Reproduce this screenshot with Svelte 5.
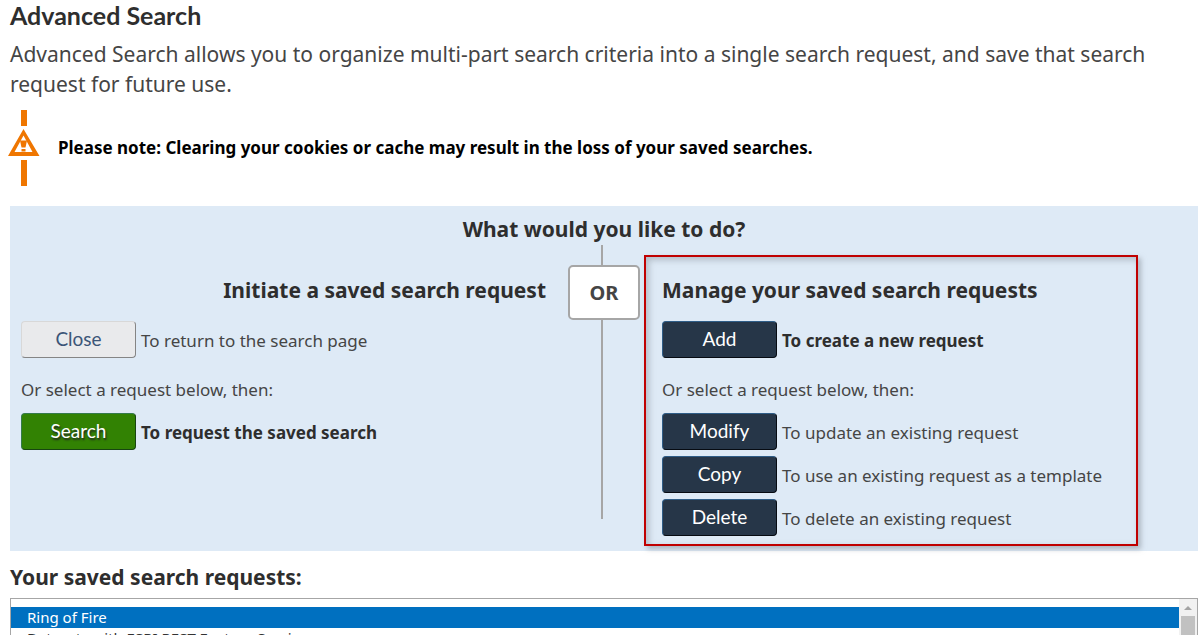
<script>
  const savedRequests = [
    'Ring of Fire',
    'Datasets with ESRI REST Feature Service',
    'Coastal elevation models',
    'Marine geology samples',
    'Sea surface temperature',
    'Storm events',
    'Tsunami hazards',
    'Volcano locations'
  ];
  const manageActions = [
    { label: 'Modify', hint: 'To update an existing request' },
    { label: 'Copy', hint: 'To use an existing request as a template' },
    { label: 'Delete', hint: 'To delete an existing request' }
  ];
  let selected = $state(savedRequests[0]);
</script>

<main>
  <h1>Advanced Search</h1>
  <p class="intro">
    Advanced Search allows you to organize multi-part search criteria into a single search
    request, and save that search request for future use.
  </p>

  <div class="note">
    <svg class="warning" width="32" height="76" viewBox="0 0 32 76" aria-hidden="true">
      <path fill="#ef7600" d="M13 0h6v16h-6zM13 50h6v26h-6z" />
      <path fill="#ef7600" fill-rule="evenodd" d="M15.500 19L31.500 46H0zM15.500 25.500L6.500 42h18z" />
      <path fill="#ef7600" d="M12 30.500h7l-1.500 7h-4zM13.500 39h4v2.500h-4z" />
    </svg>
    <strong>Please note: Clearing your cookies or cache may result in the loss of your saved searches.</strong>
  </div>

  <section class="panel">
    <h2 class="question">What would you like to do?</h2>
    <div class="choices">
      <div class="choice initiate">
        <h2>Initiate a saved search request</h2>
        <div class="action">
          <button type="button" class="close">Close</button>
          <span>To return to the search page</span>
        </div>
        <p>Or select a request below, then:</p>
        <div class="action">
          <button type="button" class="search">Search</button>
          <strong>To request the saved search</strong>
        </div>
      </div>

      <div class="divider">
        <i class="line top"></i>
        <span class="or">OR</span>
        <i class="line"></i>
      </div>

      <div class="choice manage">
        <h2>Manage your saved search requests</h2>
        <div class="action">
          <button type="button">Add</button>
          <strong>To create a new request</strong>
        </div>
        <p>Or select a request below, then:</p>
        <div class="actions">
          {#each manageActions as action}
            <div class="action">
              <button type="button">{action.label}</button>
              <span>{action.hint}</span>
            </div>
          {/each}
        </div>
      </div>
    </div>
  </section>

  <label for="requests">Your saved search requests:</label>
  <div class="list">
    <select id="requests" size="6" bind:value={selected}>
      {#each savedRequests as request}
        <option value={request}>{request}</option>
      {/each}
    </select>
    <div class="scrollbar" aria-hidden="true">
      <svg width="8" height="4" viewBox="0 0 8 4"><path fill="#a3a3a3" d="M0 4l4-4 4 4z" /></svg>
      <div class="thumb"></div>
    </div>
  </div>
</main>

<style>
  :global(body) {
    height: 100vh;
    overflow: hidden;
    background: #fff;
  }
  * {
    box-sizing: border-box;
  }
  main {
    height: 100vh;
    overflow: hidden;
    padding: 0 4px 0 10px;
    color: #454545;
    font: 17px/24px "Noto Sans", sans-serif;
  }
  h1, h2, p {
    margin: 0;
  }
  h1 {
    color: #2e2e2e;
    font: bold 25px/30px Lato, sans-serif;
  }
  h2, label {
    color: #2e2e2e;
    font-size: 21px;
    font-weight: bold;
    line-height: 28px;
  }
  .intro {
    margin-top: 9px;
    font-size: 21px;
    line-height: 30px;
  }
  .note {
    display: flex;
    align-items: center;
    gap: 18px;
    margin: 11px 0 20px -2px;
    color: #000;
  }
  .warning {
    flex: none;
  }
  .panel {
    padding-top: 9px;
    background: #deeaf6;
  }
  .question {
    text-align: center;
  }
  .choices {
    display: grid;
    grid-template-columns: 1fr 72px 1fr;
    padding-bottom: 5px;
  }
  .choice {
    margin-top: 12px;
    padding-top: 21px;
  }
  .initiate {
    padding-left: 11px;
  }
  .initiate h2 {
    padding-right: 22px;
    text-align: right;
  }
  .manage {
    margin-right: 60px;
    margin-left: 4px;
    padding: 19px 16px 8px;
    border: 2px solid #c00000;
    box-shadow: 3px 3px 5px #8c959e99, inset 3px 3px 6px #8c959e88;
  }
  .choice h2 {
    margin-bottom: 17px;
  }
  .action {
    display: flex;
    align-items: center;
    gap: 5px;
  }
  .action > :last-child {
    padding-top: 2px;
  }
  .action strong {
    color: #2e2e2e;
  }
  .choice p {
    margin: 20px 0 11px;
  }
  .actions {
    display: grid;
    gap: 6px;
  }
  button {
    width: 115px;
    height: 37px;
    padding: 0 0 2px;
    border: 1px solid;
    border-color: #2f5d87 #060b12 #060b12 #2f5d87;
    border-radius: 4px;
    background: #263648;
    color: #fff;
    font: 19px/30px Lato, sans-serif;
  }
  .close {
    border-color: #d8d8d8 #858585 #858585 #d8d8d8;
    background: #e9eaec;
    color: #3b5578;
  }
  .search {
    border-color: #347b4a #174511 #174511 #347b4a;
    background: #328203;
    text-shadow: 1px 2px 2px #222;
  }
  .divider {
    display: flex;
    flex-direction: column;
    align-items: center;
    padding: 2px 0 27px;
  }
  .line {
    flex: 1;
    width: 2px;
    margin-right: 4px;
    background: #a6a6a6;
  }
  .line.top {
    flex: 0 0 20px;
  }
  .or {
    width: 100%;
    border: 2px solid #a6a6a6;
    border-radius: 5px;
    background: #fff;
    font-size: 20px;
    font-weight: bold;
    line-height: 51px;
    text-align: center;
  }
  label {
    display: block;
    margin: 12px 0 7px;
  }
  .list {
    display: flex;
    height: 170px;
    border: 1px solid #a6a6a6;
  }
  select {
    flex: 1;
    min-width: 0;
    padding: 8px 0;
    overflow-y: auto;
    border: 0;
    border-radius: 0;
    outline: 0;
    background: #fff;
    color: #333;
    font: 15px/21px "Noto Sans", sans-serif;
    scrollbar-width: none;
  }
  option {
    min-height: 21px;
    padding: 0 16px;
  }
  option:checked {
    background: #0070c0 linear-gradient(#0070c0, #0070c0);
    color: #fff;
  }
  .scrollbar {
    display: flex;
    flex: 0 0 18px;
    flex-direction: column;
    align-items: center;
    gap: 6px;
    padding-top: 7px;
    background: #f1f1f1;
  }
  .thumb {
    width: 14px;
    height: 90px;
    background: #c1c1c1;
  }
</style>
